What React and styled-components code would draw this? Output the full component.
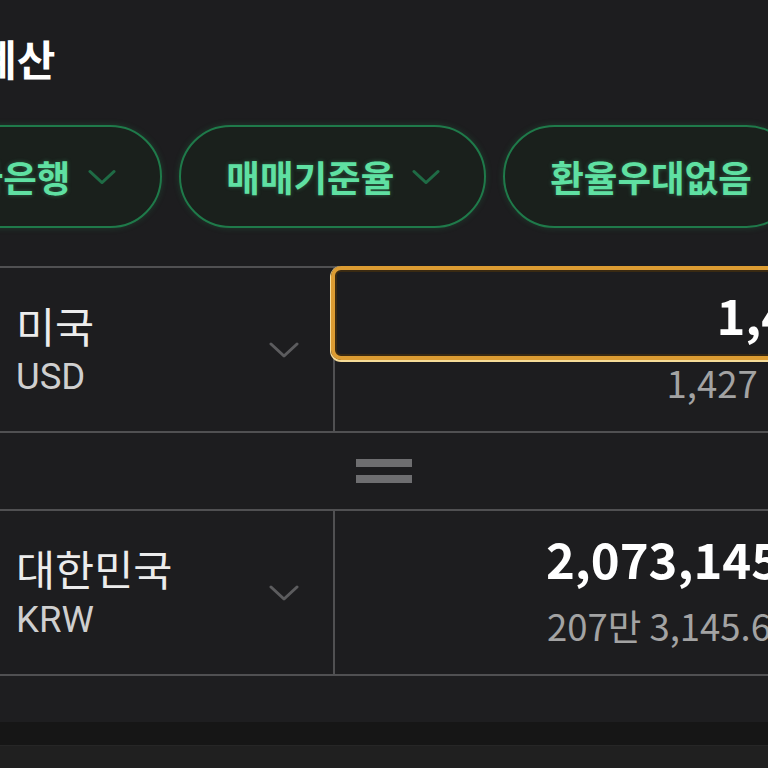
import React from "react";
import styled, { createGlobalStyle } from "styled-components";

const GlobalStyle = createGlobalStyle`
  html, body {
    margin: 0;
    background: #1d1d1f;
  }
  body {
    font-family: "Noto Sans CJK KR", "Noto Sans", sans-serif;
  }
`;

const Screen = styled.div`
  width: 768px;
  height: 768px;
  overflow: hidden;
  background: #1d1d1f;
  display: flex;
  flex-direction: column;
`;

const Title = styled.h1`
  margin: 28px 0 0 -22px;
  font-size: 42px;
  font-weight: 700;
  line-height: 60px;
  color: #ffffff;
  white-space: nowrap;
`;

const ChipRow = styled.div`
  display: flex;
  gap: 17px;
  margin: 37px 0 0 -111px;
`;

const Chip = styled.div`
  flex-shrink: 0;
  box-sizing: border-box;
  height: 103px;
  padding: 0 44px 0 45px;
  display: flex;
  align-items: center;
  gap: 18px;
  border: 2px solid #1f7a4a;
  border-radius: 52px;
  background: #1a201c;
  box-shadow: 0 0 6px rgba(40, 160, 90, 0.25);
  color: #5fe0a2;
  font-size: 36.5px;
  font-weight: 700;
  white-space: nowrap;
  text-shadow: 0 0 4px rgba(80, 220, 150, 0.35);
`;

const Chevron = ({ color, width = 28 }) => (
  <svg width={width} height="16" viewBox="0 0 30 16" fill="none">
    <polyline
      points="2,2 15,14 28,2"
      stroke={color}
      strokeWidth="3"
      strokeLinecap="round"
      strokeLinejoin="round"
    />
  </svg>
);

const Table = styled.div`
  width: 877px;
  margin-top: 38px;
  border-top: 2px solid #505052;
`;

const Row = styled.div`
  display: grid;
  grid-template-columns: 333px 1fr;
  height: 165px;
  box-sizing: border-box;
  border-bottom: 2px solid #505052;
`;

const CountryCell = styled.div`
  display: flex;
  align-items: center;
  justify-content: space-between;
  padding: 0 34px 0 16px;
`;

const CountryText = styled.div`
  display: flex;
  flex-direction: column;
`;

const CountryName = styled.span`
  font-size: 42.5px;
  line-height: 50px;
  color: #ececec;
`;

const CurrencyCode = styled.span`
  margin-top: 4px;
  font-family: Roboto, "Noto Sans CJK KR", sans-serif;
  font-size: 36.5px;
  line-height: 46px;
  color: #cfcfcf;
`;

const AmountCell = styled.div`
  border-left: 2px solid #505052;
  display: flex;
  flex-direction: column;
  align-items: stretch;
`;

const AmountBox = styled.div`
  box-sizing: border-box;
  height: ${(p) => (p.$focused ? "94px" : "92px")};
  margin: ${(p) => (p.$focused ? "-2px 0 0 -4px" : "0")};
  display: flex;
  align-items: center;
  justify-content: flex-end;
  padding-right: ${(p) => (p.$focused ? "25px" : "52px")};
  border: ${(p) => (p.$focused ? "4px solid #dc9c32" : "none")};
  border-radius: 10px;
  box-shadow: ${(p) =>
    p.$focused
      ? "0 1px 0 1px #f6dc98, inset 0 0 0 2px #3a2a12"
      : "none"};
  font-size: 49px;
  font-weight: 700;
  color: #ffffff;
  white-space: nowrap;
`;

const AmountHint = styled.div`
  text-align: right;
  padding-right: 44px;
  font-size: 36.5px;
  line-height: 46px;
  color: #a3a3a3;
  white-space: nowrap;
`;

const EqualsBand = styled.div`
  height: 78px;
  box-sizing: border-box;
  border-bottom: 2px solid #505052;
  display: flex;
  flex-direction: column;
  justify-content: center;
  gap: 8px;
  padding-left: 356px;
`;

const EqualsBar = styled.div`
  width: 56px;
  height: 8px;
  background: #6e6e70;
`;

const FooterGap = styled.div`
  height: 46px;
  background: #1e1e20;
`;

const FooterShade = styled.div`
  height: 23px;
  background: #161616;
  border-bottom: 1px solid #262626;
`;

const FooterRest = styled.div`
  flex: 1;
  background: #202020;
`;

const rows = [
  {
    name: "미국",
    code: "USD",
    amount: "1,427",
    hint: "1,427 달러",
    focused: true,
  },
  {
    name: "대한민국",
    code: "KRW",
    amount: "2,073,145.6",
    hint: "207만 3,145.60 원",
    focused: false,
  },
];

function CurrencyRow({ row }) {
  return (
    <Row>
      <CountryCell>
        <CountryText>
          <CountryName>{row.name}</CountryName>
          <CurrencyCode>{row.code}</CurrencyCode>
        </CountryText>
        <Chevron color="#5c5c5e" width={30} />
      </CountryCell>
      <AmountCell>
        <AmountBox $focused={row.focused}>{row.amount}</AmountBox>
        <AmountHint>{row.hint}</AmountHint>
      </AmountCell>
    </Row>
  );
}

export default function App() {
  return (
    <>
      <GlobalStyle />
      <Screen>
        <Title>계산</Title>
        <ChipRow>
          <Chip>
            하나은행
            <Chevron color="#1f6b45" />
          </Chip>
          <Chip>
            매매기준율
            <Chevron color="#1f6b45" />
          </Chip>
          <Chip>환율우대없음</Chip>
        </ChipRow>
        <Table>
          <CurrencyRow row={rows[0]} />
          <EqualsBand>
            <EqualsBar />
            <EqualsBar />
          </EqualsBand>
          <CurrencyRow row={rows[1]} />
        </Table>
        <FooterGap />
        <FooterShade />
        <FooterRest />
      </Screen>
    </>
  );
}
